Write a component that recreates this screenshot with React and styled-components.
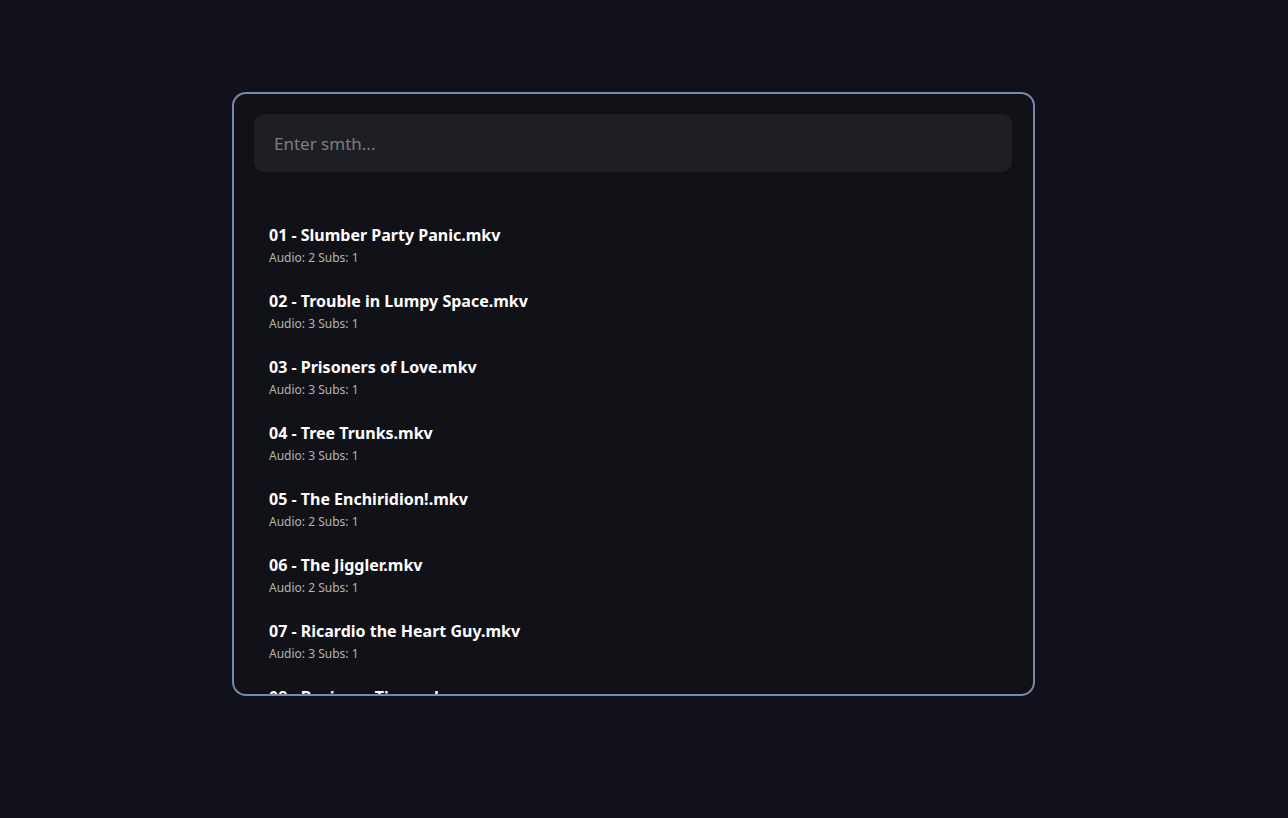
import styled, { createGlobalStyle } from "styled-components";

const GlobalStyle = createGlobalStyle`
	html, body {
		margin: 0;
		padding: 0;
		background: #11111b;
		font-family: "Noto Sans", "Open Sans", sans-serif;
	}
	* { box-sizing: border-box; }
`;

const Page = styled.main`
	width: 100%;
	height: 818px;
	display: flex;
	justify-content: flex-start;
	padding: 92px 0 0 232px;
`;

const Card = styled.section`
	width: 803px;
	height: 604px;
	background: #111217;
	border: 2px solid #7489ad;
	border-radius: 14px;
	padding: 20px 21px 0 20px;
	display: flex;
	flex-direction: column;
	overflow: hidden;
`;

const SearchInput = styled.input`
	width: 100%;
	height: 58px;
	flex-shrink: 0;
	background: #1e1f24;
	border: none;
	border-radius: 10px;
	padding: 0 20px;
	font-family: inherit;
	font-size: 17px;
	color: #e8e8e8;
	outline: none;

	&::placeholder {
		color: #7c7d82;
	}
`;

const List = styled.ul`
	list-style: none;
	margin: 0;
	padding: 51px 0 0;
	flex: 1;
	overflow: hidden;
`;

const Item = styled.li`
	padding: 0 15px;
	height: 66px;
`;

const Title = styled.div`
	font-size: 16px;
	font-weight: 700;
	line-height: 24px;
	color: #ffffff;
`;

const Meta = styled.div`
	font-size: 12px;
	line-height: 22px;
	color: #b4b4b8;
`;

const files = [
	{ name: "01 - Slumber Party Panic.mkv", audio: 2, subs: 1 },
	{ name: "02 - Trouble in Lumpy Space.mkv", audio: 3, subs: 1 },
	{ name: "03 - Prisoners of Love.mkv", audio: 3, subs: 1 },
	{ name: "04 - Tree Trunks.mkv", audio: 3, subs: 1 },
	{ name: "05 - The Enchiridion!.mkv", audio: 2, subs: 1 },
	{ name: "06 - The Jiggler.mkv", audio: 2, subs: 1 },
	{ name: "07 - Ricardio the Heart Guy.mkv", audio: 3, subs: 1 },
	{ name: "08 - Business Time.mkv", audio: 2, subs: 1 },
	{ name: "09 - My Two Favorite People.mkv", audio: 3, subs: 1 },
];

export default function App() {
	return (
		<>
			<GlobalStyle />
			<Page>
				<Card>
					<SearchInput placeholder="Enter smth..." />
					<List>
						{files.map((f) => (
							<Item key={f.name}>
								<Title>{f.name}</Title>
								<Meta>Audio: {f.audio} Subs: {f.subs}</Meta>
							</Item>
						))}
					</List>
				</Card>
			</Page>
		</>
	);
}
